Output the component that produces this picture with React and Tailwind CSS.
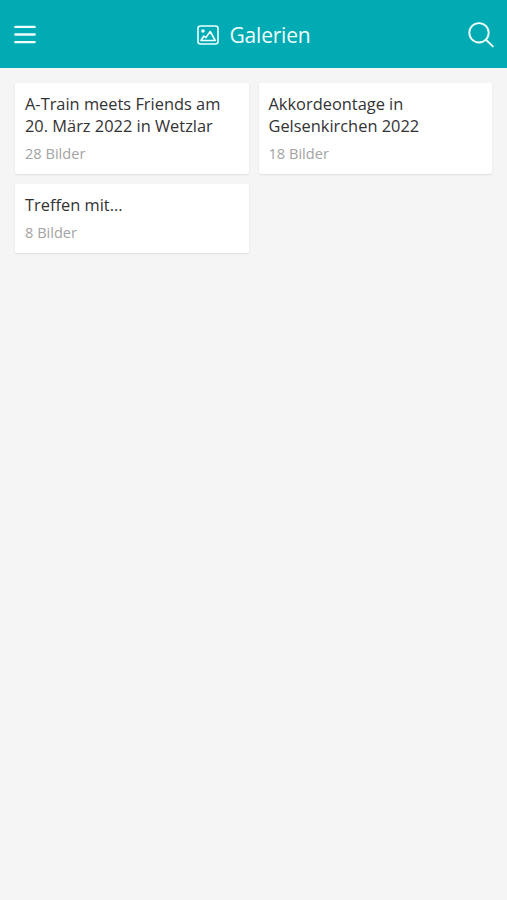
import React from 'react';

const galleries = [
  { id: 1, title: 'A-Train meets Friends am 20. März 2022 in Wetzlar', count: 28 },
  { id: 2, title: 'Akkordeontage in Gelsenkirchen 2022', count: 18 },
  { id: 3, title: 'Treffen mit...', count: 8 },
];

function Header() {
  return (
    <header className="flex h-[68px] items-center justify-between bg-[#00abb3] pl-[14px] pr-[13px] pt-px text-[#f0ffff]">
      <button aria-label="Menu">
        <svg width="22" height="19" viewBox="0 0 22 19" fill="none" stroke="currentColor" strokeWidth="2.4" strokeLinecap="round">
          <path d="M1.4 1.9h19.2M1.4 9.5h19.2M1.4 17.1h19.2" />
        </svg>
      </button>
      <div className="flex items-center gap-[11px] pl-[3px]">
        <svg width="22" height="20" viewBox="0 0 22 20" fill="none" stroke="currentColor" strokeWidth="1.6" strokeLinejoin="round">
          <rect x="1" y="1" width="20" height="18" rx="2.5" />
          <circle cx="6" cy="6" r="1.8" fill="currentColor" stroke="none" />
          <path d="M4 15.5h14.2L13.2 6.5l-4.4 6.2-2-1.7L4 15.5z" />
        </svg>
        <h1 className="text-[21px] leading-[30px] tracking-[-0.01em]">Galerien</h1>
      </div>
      <button aria-label="Suche">
        <svg width="26" height="26" viewBox="0 0 26 26" fill="none" stroke="currentColor" strokeWidth="1.9" strokeLinecap="round">
          <circle cx="11" cy="10.8" r="9.7" />
          <path d="M18 17.8l6.8 6.6" />
        </svg>
      </button>
    </header>
  );
}

function GalleryCard({ gallery }) {
  return (
    <div className="rounded-[2px] bg-white px-[10px] pb-[11px] pt-[10px] shadow-[0_1px_2px_rgba(0,0,0,0.1)]">
      <h2 className="text-[16.4px] leading-[22px] text-[#333]">{gallery.title}</h2>
      <p className="mt-[7px] text-[14.6px] leading-[19px] text-[#a3a3a3]">{gallery.count} Bilder</p>
    </div>
  );
}

export default function App() {
  return (
    <div className="min-h-screen bg-[#f5f5f5] font-['Open_Sans',sans-serif]">
      <Header />
      <main className="grid grid-cols-2 gap-[10px] px-[15px] pt-[14.5px]">
        {galleries.map((gallery) => (
          <GalleryCard key={gallery.id} gallery={gallery} />
        ))}
      </main>
    </div>
  );
}
